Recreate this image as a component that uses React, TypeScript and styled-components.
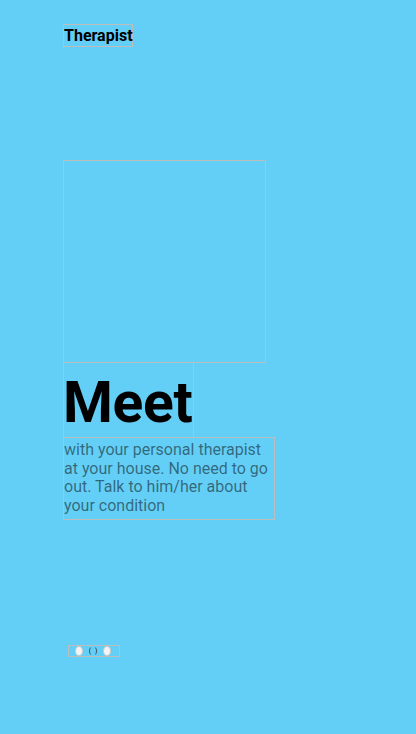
import React from "react";
import styled, { createGlobalStyle } from "styled-components";

const Global = createGlobalStyle`
  html, body { margin: 0; padding: 0; }
  body {
    background: #64cff6;
    font-family: Roboto, "Liberation Sans", sans-serif;
  }
`;

const Page = styled.div`
  width: 416px;
  height: 734px;
  background: #64cff6;
  display: flex;
  flex-direction: column;
  align-items: flex-start;
  padding: 24px 0 0 63px;
  box-sizing: border-box;
`;

const Outlined = styled.div`
  border: 1px solid #bdbdbd;
  box-sizing: border-box;
`;

const Title = styled(Outlined)`
  width: 70px;
  font-size: 16px;
  font-weight: 700;
  line-height: 21px;
  height: 23px;
  color: #000;
  white-space: nowrap;
`;

const ImageBox = styled(Outlined)`
  width: 203px;
  height: 203px;
  margin-top: 113px;
`;

const Heading = styled(Outlined)`
  width: 131px;
  height: 76px;
  margin-top: -1px;
  font-size: 57px;
  font-weight: 700;
  line-height: 80px;
  color: #000;
  letter-spacing: -0.3px;
  text-indent: -1px;
  overflow: hidden;
  white-space: nowrap;
`;

const Body = styled(Outlined)`
  width: 212px;
  height: 83px;
  margin-top: -1px;
  padding-top: 3px;
  font-size: 16px;
  line-height: 18.6px;
  color: rgba(0, 0, 0, 0.5);
`;

const Dots = styled(Outlined)`
  margin-top: 125px;
  margin-left: 5px;
  width: 52px;
  height: 12px;
  display: flex;
  align-items: center;
  gap: 6px;
  padding-left: 6px;
`;

const Dot = styled.span<{ $active?: boolean }>`
  width: 8px;
  height: 10px;
  border-radius: 50%;
  box-sizing: border-box;
  background: ${(p) => (p.$active ? "transparent" : "#f4f4f4")};
  border: 1px solid
    ${(p) => (p.$active ? "#3f5a68" : "#c8c8c8")};
  border-top-color: ${(p) => (p.$active ? "transparent" : "#c8c8c8")};
  border-bottom-color: ${(p) => (p.$active ? "transparent" : "#c8c8c8")};
`;

export default function App() {
  return (
    <>
      <Global />
      <Page>
        <Title>Therapist</Title>
        <ImageBox />
        <Heading>Meet</Heading>
        <Body>
          with your personal therapist at your house. No need to go out. Talk to
          him/her about your condition
        </Body>
        <Dots>
          <Dot />
          <Dot $active />
          <Dot />
        </Dots>
      </Page>
    </>
  );
}
